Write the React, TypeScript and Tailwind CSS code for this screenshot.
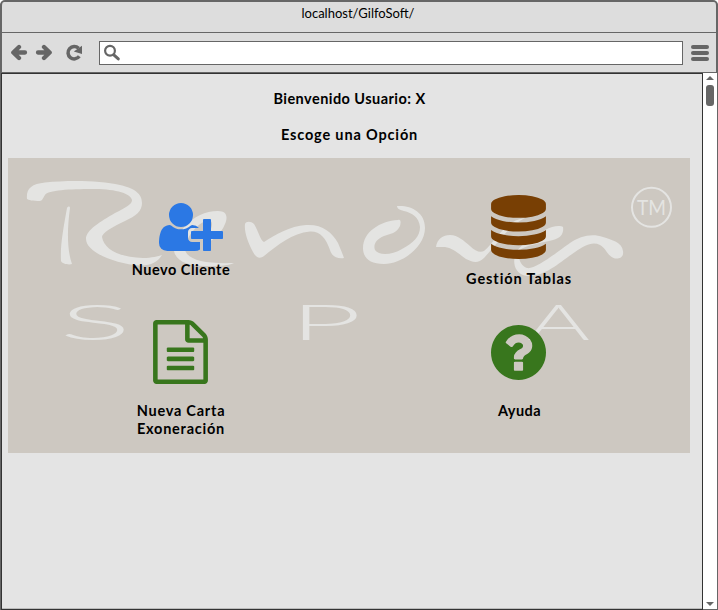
import React from "react";

type IconProps = { viewBox: string; className: string; d: string };

function Icon({ viewBox, className, d }: IconProps) {
  return (
    <svg viewBox={viewBox} className={className} fill="currentColor" aria-hidden="true">
      <path d={d} />
    </svg>
  );
}

const userPlus =
  "M704 896q-159 0-271.500-112.500t-112.500-271.500 112.500-271.500 271.500-112.500 271.500 112.500 112.500 271.500-112.500 271.500-271.500 112.500zM1664 1024h352q13 0 22.500 9.500t9.500 22.500v192q0 13-9.500 22.500t-22.500 9.500h-352v352q0 13-9.500 22.500t-22.500 9.500h-192q-13 0-22.500-9.500t-9.500-22.500v-352h-352q-13 0-22.500-9.500t-9.500-22.500v-192q0-13 9.500-22.500t22.500-9.500h352v-352q0-13 9.500-22.500t22.500-9.500h192q13 0 22.500 9.500t9.500 22.500v352zM928 1248q0 52 38 90t90 38h256v238q-68 50-171 50h-874q-121 0-194-69t-73-190q0-53 3.500-103.500t14-109 26.500-108.500 43-97.500 62-81 85.500-53.500 111.500-20q19 0 39 17 79 61 154.500 91.500t164.500 30.500 164.500-30.500 154.500-91.500q20-17 39-17 132 0 217 96h-223q-52 0-90 38t-38 90v192z";
const database =
  "M768 768q237 0 443-43t325-127v170q0 69-103 128t-280 93.500-385 34.500-385-34.500-280-93.500-103-128v-170q119 84 325 127t443 43zM768 1536q237 0 443-43t325-127v170q0 69-103 128t-280 93.500-385 34.500-385-34.500-280-93.500-103-128v-170q119 84 325 127t443 43zM768 1152q237 0 443-43t325-127v170q0 69-103 128t-280 93.500-385 34.500-385-34.500-280-93.500-103-128v-170q119 84 325 127t443 43zM768 0q208 0 385 34.500t280 93.500 103 128v128q0 69-103 128t-280 93.500-385 34.500-385-34.500-280-93.500-103-128v-128q0-69 103-128t280-93.500 385-34.500z";
const fileText =
  "M1468 380q28 28 48 76t20 88v1152q0 40-28 68t-68 28h-1344q-40 0-68-28t-28-68v-1600q0-40 28-68t68-28h896q40 0 88 20t76 48zM1024 136v376h376q-10-29-22-41l-313-313q-12-12-41-22zM1408 1664v-1024h-416q-40 0-68-28t-28-68v-416h-768v1536h1280zM384 800q0-14 9-23t23-9h704q14 0 23 9t9 23v64q0 14-9 23t-23 9h-704q-14 0-23-9t-9-23v-64zM1120 1024q14 0 23 9t9 23v64q0 14-9 23t-23 9h-704q-14 0-23-9t-9-23v-64q0-14 9-23t23-9h704zM1120 1280q14 0 23 9t9 23v64q0 14-9 23t-23 9h-704q-14 0-23-9t-9-23v-64q0-14 9-23t23-9h704z";
const questionCircle =
  "M896 1376v-192q0-14-9-23t-23-9h-192q-14 0-23 9t-9 23v192q0 14 9 23t23 9h192q14 0 23-9t9-23zM1152 704q0-88-55.500-163t-138.500-116-170-41q-243 0-371 213-15 24 8 42l132 100q7 6 19 6 16 0 25-12 53-68 86-92 34-24 86-24 48 0 85.500 26t37.500 59q0 38-20 61t-68 45q-63 28-115.500 86.500t-52.500 125.500v36q0 14 9 23t23 9h192q14 0 23-9t9-23q0-19 21.500-49.500t54.500-49.500q32-18 49-28.500t46-35 44.500-48 28-60.500 12.500-81zM1536 896q0 209-103 385.500t-279.500 279.500-385.500 103-385.500-103-279.500-279.500-103-385.500 103-385.500 279.500-279.500 385.500-103 385.500 103 279.500 279.500 103 385.500z";

/* Brush-drawn company logo behind the menu. */
function BrandLogo() {
  return (
    <svg
      viewBox="8 158 682 295"
      className="absolute inset-0 h-[295px] w-[682px] font-['Lato',sans-serif]"
      fill="#e4e4e2"
      aria-hidden="true"
    >
      <path d="M27 199C26 189 31 184 45 182.500C70 180 100 180.500 120 185C138 189 142 196 142 203C142 211 136 216 125 221C112 227 102 233 102 237C104 249 118 257 143 258C152 258 158 256 162 255C158 262 150 266 140 265.500C115 264 86 252 86 239C86 230 100 222 115 213C127 207 132 204 132 200C130 192 112 189 92 189C70 189 48 190 45 195C43 198 42 201 40 201C33 201 28 200 27 199Z" />
      <path d="M67 208C68 206 70 206 70 208C67 230 67 250 72 264C69 265 62 264 61 261C60 245 64 225 67 208Z" />
      <path d="M174 251C174 235 192 211 218 211C227 211 228 217 225 224C221 234 212 242 203 244C210 232 215 224 210 220C200 220 184 238 185 250C188 260 205 264 234 263C228 266 217 266 205 266C190 266 176 262 174 251Z" />
      <path d="M245 224C246 221 251 221 254 224C259 232 260 240 264 242C275 235 290 226 306 225C322 224 332 232 338 243C341 250 343 255 344 258C338 259 332 257 330 250C326 238 320 231 310 231.500C292 233 278 245 264 256C260 259 256 258 253 252C248 243 244 232 245 224Z" />
      <path d="M397 206C411 205 425 212 425 228C425 247 402 264 384 264C370 264 363 258 363 248C363 232 380 221 398 220C401 219 401 222 400 226C397 233 390 234 384 236C376 239 373 245 375 250C379 256 392 255 402 249C413 243 420 237 420 227C419 217 412 213 404 211C399 210 397 208 397 206Z" />
      <path d="M436 247C437 239 443 235 450 235C458 235 464 241 470 246C475 251 480 253 484 251C497 240 505 220 525 218C510 225 500 240 484 258C478 264 472 262 466 259C458 253 452 248 445 247Z" />
      <path d="M563 227C564 233 561 238 553 240C540 243 524 246 520 250C517 256 520 266 527 268C535 270 560 250 570 243C580 236 592 233 603 237C612 240 622 242 623 251C624 257 620 259 615 258.500C608 257 606 248 600 245C592 241 584 246 575 252C560 262 545 277 527 276C514 274 513 262 515 256C518 244 535 238 545 230C552 226 560 225 563 227Z" />
      <circle cx="651.500" cy="207.300" r="19.500" fill="none" stroke="#e4e4e2" strokeWidth="2" />
      <text x="637" y="215" fontSize="21" textLength="29" lengthAdjust="spacingAndGlyphs">TM</text>
      <g fontSize="49" fontWeight="300">
        <text x="59.500" y="340.300" textLength="71.500" lengthAdjust="spacingAndGlyphs">S</text>
        <text x="290" y="340.300" textLength="71.500" lengthAdjust="spacingAndGlyphs">P</text>
        <text x="527" y="340.300" textLength="63" lengthAdjust="spacingAndGlyphs">A</text>
      </g>
    </svg>
  );
}

function Toolbar() {
  return (
    <div className="flex h-[39px] shrink-0 items-center text-[#666]">
      <svg viewBox="10 44 74 18" className="ml-[8px] h-[18px] w-[74px]" fill="none" stroke="currentColor" aria-hidden="true">
        <path d="M25 52.500H14M19 47L13.300 52.500L19 58" strokeWidth="4.300" strokeLinecap="round" strokeLinejoin="round" />
        <path d="M38 52.500H49M44 47L49.700 52.500L44 58" strokeWidth="4.300" strokeLinecap="round" strokeLinejoin="round" />
        <path d="M79.300 56.300A6.200 6.200 0 1 1 78.600 48.300" strokeWidth="3.500" />
        <path d="M82 45.800V53.900L73.800 51.500Z" fill="currentColor" stroke="none" />
      </svg>
      <div className="ml-[15px] flex h-[24px] w-[584px] items-center border border-[#666] bg-white">
        <svg viewBox="0 0 18 18" className="ml-[3px] h-[18px] w-[18px]" fill="none" stroke="currentColor" aria-hidden="true">
          <circle cx="7" cy="6.800" r="4.900" strokeWidth="2.200" />
          <path d="M10.800 10.800L15.300 14.900" strokeWidth="3" strokeLinecap="round" />
        </svg>
      </div>
      <div className="ml-[8px] flex flex-col gap-[2px]">
        <span className="h-1 w-[18px] rounded-full bg-[#666]" />
        <span className="h-1 w-[18px] rounded-full bg-[#666]" />
        <span className="h-1 w-[18px] rounded-full bg-[#666]" />
      </div>
    </div>
  );
}

export default function App() {
  return (
    <div className="flex h-[610px] w-[718px] flex-col overflow-hidden rounded-t-[5px] bg-[#666] px-px pt-[2px] font-['Lato','Open_Sans',sans-serif] text-black">
      <div className="-ml-px flex h-[71px] w-[718px] shrink-0 flex-col rounded-t-[4px] border-x-2 border-b border-[#666] bg-[#ddd]">
        <div className="flex h-[31px] shrink-0 justify-center border-b border-[#666] pt-[2px]">
          <span className="-ml-[2px] text-[13px] leading-[18px]">localhost/GilfoSoft/</span>
        </div>
        <Toolbar />
      </div>

      <div className="flex min-h-0 flex-1">
        <main className="flex w-[702px] flex-col items-start border border-[#333] bg-[#e4e4e4] pl-[6px] shadow-[inset_0_-1px_0_#bbb]">
          <div className="flex h-[84px] w-[682px] flex-col gap-[18px] pt-[16px] pl-px text-center text-[14.5px] leading-[18px] font-bold">
            <h1 className="tracking-[0.45px]">Bienvenido Usuario: X</h1>
            <h2 className="tracking-[0.85px]">Escoge una Opción</h2>
          </div>
          <section className="relative h-[295px] w-[682px] bg-[#cdc8c1]">
            <BrandLogo />
            <div className="relative grid grid-cols-[346px_330px] grid-rows-[162px_133px] text-center text-[14.5px] leading-[18px] font-bold">
              <a className="flex flex-col items-center pt-[41px]">
                <Icon viewBox="0 0 2048 1792" className="ml-5 h-[56px] w-[64px] text-[#2b78e4]" d={userPlus} />
                <span className="mt-[6px] tracking-[0.5px]">Nuevo Cliente</span>
              </a>
              <a className="flex flex-col items-center pt-[37px]">
                <Icon viewBox="0 0 1536 1792" className="mr-px h-[64px] w-[55px] text-[#783f04]" d={database} />
                <span className="mt-[11px] tracking-[0.9px]">Gestión Tablas</span>
              </a>
              <a className="flex flex-col items-center">
                <Icon viewBox="0 0 1536 1792" className="mr-px h-[64px] w-[55px] text-[#38761d]" d={fileText} />
                <span className="mt-[18px] w-[110px] tracking-[0.75px]">Nueva Carta Exoneración</span>
              </a>
              <a className="flex flex-col items-center pt-[5px]">
                <Icon viewBox="0 128 1536 1536" className="mr-px h-[55px] w-[55px] text-[#38761d]" d={questionCircle} />
                <span className="mt-[22px] ml-px tracking-[0.45px]">Ayuda</span>
              </a>
            </div>
          </section>
        </main>
        <aside className="flex w-[14px] flex-col items-center border-b border-[#666] bg-white pt-[3px] pb-[3px] text-[#666]">
          <svg viewBox="0 0 8 4" className="h-1 w-2" fill="currentColor" aria-hidden="true">
            <path d="M0 4L4 0L8 4Z" />
          </svg>
          <span className="mt-[5px] h-[21px] w-2 rounded-[3px] bg-[#666]" />
          <svg viewBox="0 0 8 4" className="mt-auto h-1 w-2" fill="currentColor" aria-hidden="true">
            <path d="M0 0H8L4 4Z" />
          </svg>
        </aside>
      </div>
    </div>
  );
}
